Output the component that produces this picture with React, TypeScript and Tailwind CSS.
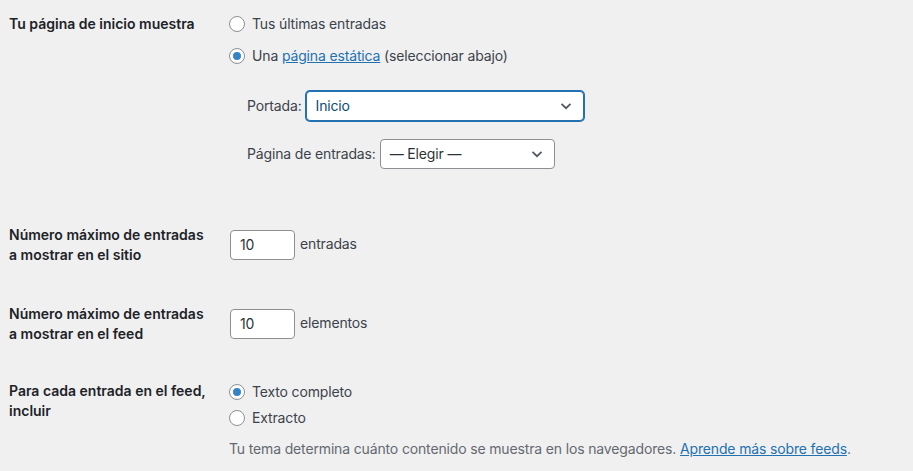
import React from 'react';

function Radio({ checked }: { checked?: boolean }) {
  return (
    <span className="mr-[7px] flex h-4 w-4 shrink-0 items-center justify-center rounded-full border border-[#8c8f94] bg-white">
      {checked && <span className="h-2 w-2 rounded-full bg-[#3582c4]" />}
    </span>
  );
}

function Chevron() {
  return (
    <svg width="12" height="8" viewBox="0 0 12 8" fill="none" className="shrink-0">
      <path d="M1.5 1.8 6 6.2 10.5 1.8" stroke="#50575e" strokeWidth="1.7" />
    </svg>
  );
}

function Select({ value, width, focused }: { value: string; width: string; focused?: boolean }) {
  return (
    <div
      className={[
        'flex h-[30px] items-center justify-between rounded-[4px] border bg-white pl-[9px] pr-[11px]',
        width,
        focused ? 'border-[#2271b1] text-[#0a4b78] shadow-[0_0_0_1px_#2271b1]' : 'border-[#8c8f94] text-[#2c3338]',
      ].join(' ')}
    >
      <span>{value}</span>
      <Chevron />
    </div>
  );
}

function NumberBox({ value }: { value: string }) {
  return (
    <div className="ml-px flex h-[30px] w-[65px] items-center rounded-[4px] border border-[#8c8f94] bg-white pl-[9px] text-[#2c3338]">
      {value}
    </div>
  );
}

export default function App() {
  return (
    <div
      className="min-h-screen bg-[#f0f0f1] pl-[9px] text-[14px] leading-5 tracking-[-0.15px] text-[#3c434a]"
      style={{ fontFamily: 'Inter, "Liberation Sans", sans-serif' }}
    >
      {/* Página de inicio */}
      <div className="flex pt-[14px]">
        <div className="w-[220px] shrink-0 font-semibold tracking-normal text-[#1d2327]">Tu página de inicio muestra</div>
        <div>
          <label className="flex items-center">
            <Radio />
            Tus últimas entradas
          </label>
          <label className="mt-[12px] flex items-center">
            <Radio checked />
            <span>
              Una{' '}
              <a className="text-[#2271b1] underline">página estática</a>{' '}
              (seleccionar abajo)
            </span>
          </label>
          <div className="pl-[18px]">
            <div className="mt-[25px] flex items-center gap-[4px]">
              <span>Portada:</span>
              <Select value="Inicio" width="w-[278px]" focused />
            </div>
            <div className="mt-[18px] flex items-center gap-[4px]">
              <span>Página de entradas:</span>
              <Select value="— Elegir —" width="w-[175px]" />
            </div>
          </div>
        </div>
      </div>

      {/* Entradas en el sitio */}
      <div className="mt-[56px] flex">
        <div className="w-[220px] shrink-0 font-semibold tracking-normal text-[#1d2327]">
          Número máximo de entradas
          <br />a mostrar en el sitio
        </div>
        <div className="flex items-center gap-[5px] pt-[5px] self-start">
          <NumberBox value="10" />
          <span className="-mt-[2px]">entradas</span>
        </div>
      </div>

      {/* Entradas en el feed */}
      <div className="mt-[39px] flex">
        <div className="w-[220px] shrink-0 font-semibold tracking-normal text-[#1d2327]">
          Número máximo de entradas
          <br />a mostrar en el feed
        </div>
        <div className="flex items-center gap-[5px] pt-[5px] self-start">
          <NumberBox value="10" />
          <span className="-mt-[2px]">elementos</span>
        </div>
      </div>

      {/* Contenido del feed */}
      <div className="mt-[37px] flex">
        <div className="w-[220px] shrink-0 font-semibold tracking-normal text-[#1d2327]">
          Para cada entrada en el feed,
          <br />
          incluir
        </div>
        <div className="pt-[1px]">
          <label className="flex items-center">
            <Radio checked />
            Texto completo
          </label>
          <label className="mt-[6px] flex items-center">
            <Radio />
            Extracto
          </label>
          <p className="mt-[11px] text-[#646970]">
            Tu tema determina cuánto contenido se muestra en los navegadores.{' '}
            <a className="text-[#2271b1] underline">Aprende más sobre feeds</a>.
          </p>
        </div>
      </div>
    </div>
  );
}
